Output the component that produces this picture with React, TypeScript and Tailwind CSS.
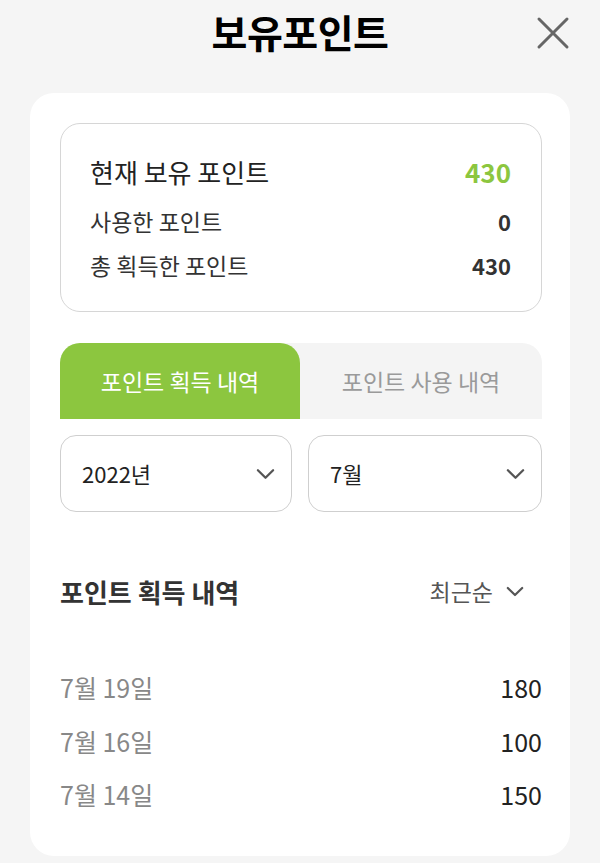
import { useState } from "react"

const FONT = { fontFamily: '"Noto Sans CJK KR", "Noto Sans", sans-serif' }

function Chevron({ className }: { className?: string }) {
  return (
    <svg className={className} viewBox="0 0 20 12" fill="none" stroke="currentColor" strokeWidth={2.4} strokeLinecap="round" strokeLinejoin="round">
      <path d="M2 2l8 8 8-8" />
    </svg>
  )
}

const history = [
  { date: "7월 19일", amount: 180 },
  { date: "7월 16일", amount: 100 },
  { date: "7월 14일", amount: 150 },
]

export default function App() {
  const [tab, setTab] = useState<"earn" | "use">("earn")

  return (
    <div className="min-h-[863px] bg-[#f5f5f5] text-[#222]" style={FONT}>
      {/* Header */}
      <div className="relative h-[93px] flex justify-center">
        <h1 className="mt-[6px] text-[39px] leading-[50px] font-bold text-black tracking-[-0.5px]">보유포인트</h1>
        <button className="absolute right-[30px] top-[16px] w-[34px] h-[34px] text-[#666]">
          <svg viewBox="0 0 34 34" fill="none" stroke="currentColor" strokeWidth={3} strokeLinecap="round">
            <path d="M3 3l28 28M31 3L3 31" />
          </svg>
        </button>
      </div>

      {/* Card */}
      <div className="mx-[30px] bg-white rounded-[24px] pl-[30px] pr-[28px] pt-[30px] pb-[34px]">
        {/* Summary */}
        <div className="h-[189px] border border-[#d6d6d6] rounded-[20px] pl-[29px] pr-[30px] pt-[27px]">
          <div className="h-[40px] flex items-center justify-between">
            <span className="text-[26px] text-[#222]">현재 보유 포인트</span>
            <span className="text-[26px] font-bold text-[#8cc63f]">430</span>
          </div>
          <div className="mt-[10px] h-[40px] flex items-center justify-between">
            <span className="text-[23px] text-[#333]">사용한 포인트</span>
            <span className="text-[22px] font-bold text-[#333]">0</span>
          </div>
          <div className="mt-[4px] h-[40px] flex items-center justify-between">
            <span className="text-[23px] text-[#333]">총 획득한 포인트</span>
            <span className="text-[22px] font-bold text-[#333]">430</span>
          </div>
        </div>

        {/* Tabs */}
        <div className="mt-[31px] h-[76px] flex bg-[#f4f4f4] rounded-t-[20px]">
          <button
            onClick={() => setTab("earn")}
            className={`w-[240px] rounded-t-[20px] text-[23px] ${tab === "earn" ? "bg-[#8cc63f] text-white" : "text-[#9a9a9a]"}`}
          >
            포인트 획득 내역
          </button>
          <button
            onClick={() => setTab("use")}
            className={`flex-1 rounded-t-[20px] text-[23px] ${tab === "use" ? "bg-[#8cc63f] text-white" : "text-[#9a9a9a]"}`}
          >
            포인트 사용 내역
          </button>
        </div>

        {/* Selects */}
        <div className="mt-[16px] flex gap-[16px]">
          <div className="w-[232px] h-[77px] border border-[#cfcfcf] rounded-[16px] flex items-center justify-between pl-[21px] pr-[16px]">
            <span className="text-[22px] text-[#222]">2022년</span>
            <Chevron className="w-[19px] h-[12px] text-[#555]" />
          </div>
          <div className="flex-1 h-[77px] border border-[#cfcfcf] rounded-[16px] flex items-center justify-between pl-[21px] pr-[16px]">
            <span className="text-[22px] text-[#222]">7월</span>
            <Chevron className="w-[19px] h-[12px] text-[#555]" />
          </div>
        </div>

        {/* Section heading */}
        <div className="mt-[59px] h-[40px] flex items-center justify-between pr-[18px]">
          <span className="text-[26px] font-bold text-[#333]">포인트 획득 내역</span>
          <div className="flex items-center gap-[13px] text-[#555]">
            <span className="text-[23px]">최근순</span>
            <Chevron className="w-[18px] h-[11px]" />
          </div>
        </div>

        {/* List */}
        <div className="mt-[50px]">
          {history.map((h) => (
            <div key={h.date} className="h-[53.5px] flex items-center justify-between">
              <span className="text-[25px] text-[#888]">{h.date}</span>
              <span className="text-[25px] text-[#222]">{h.amount}</span>
            </div>
          ))}
        </div>
      </div>
    </div>
  )
}
